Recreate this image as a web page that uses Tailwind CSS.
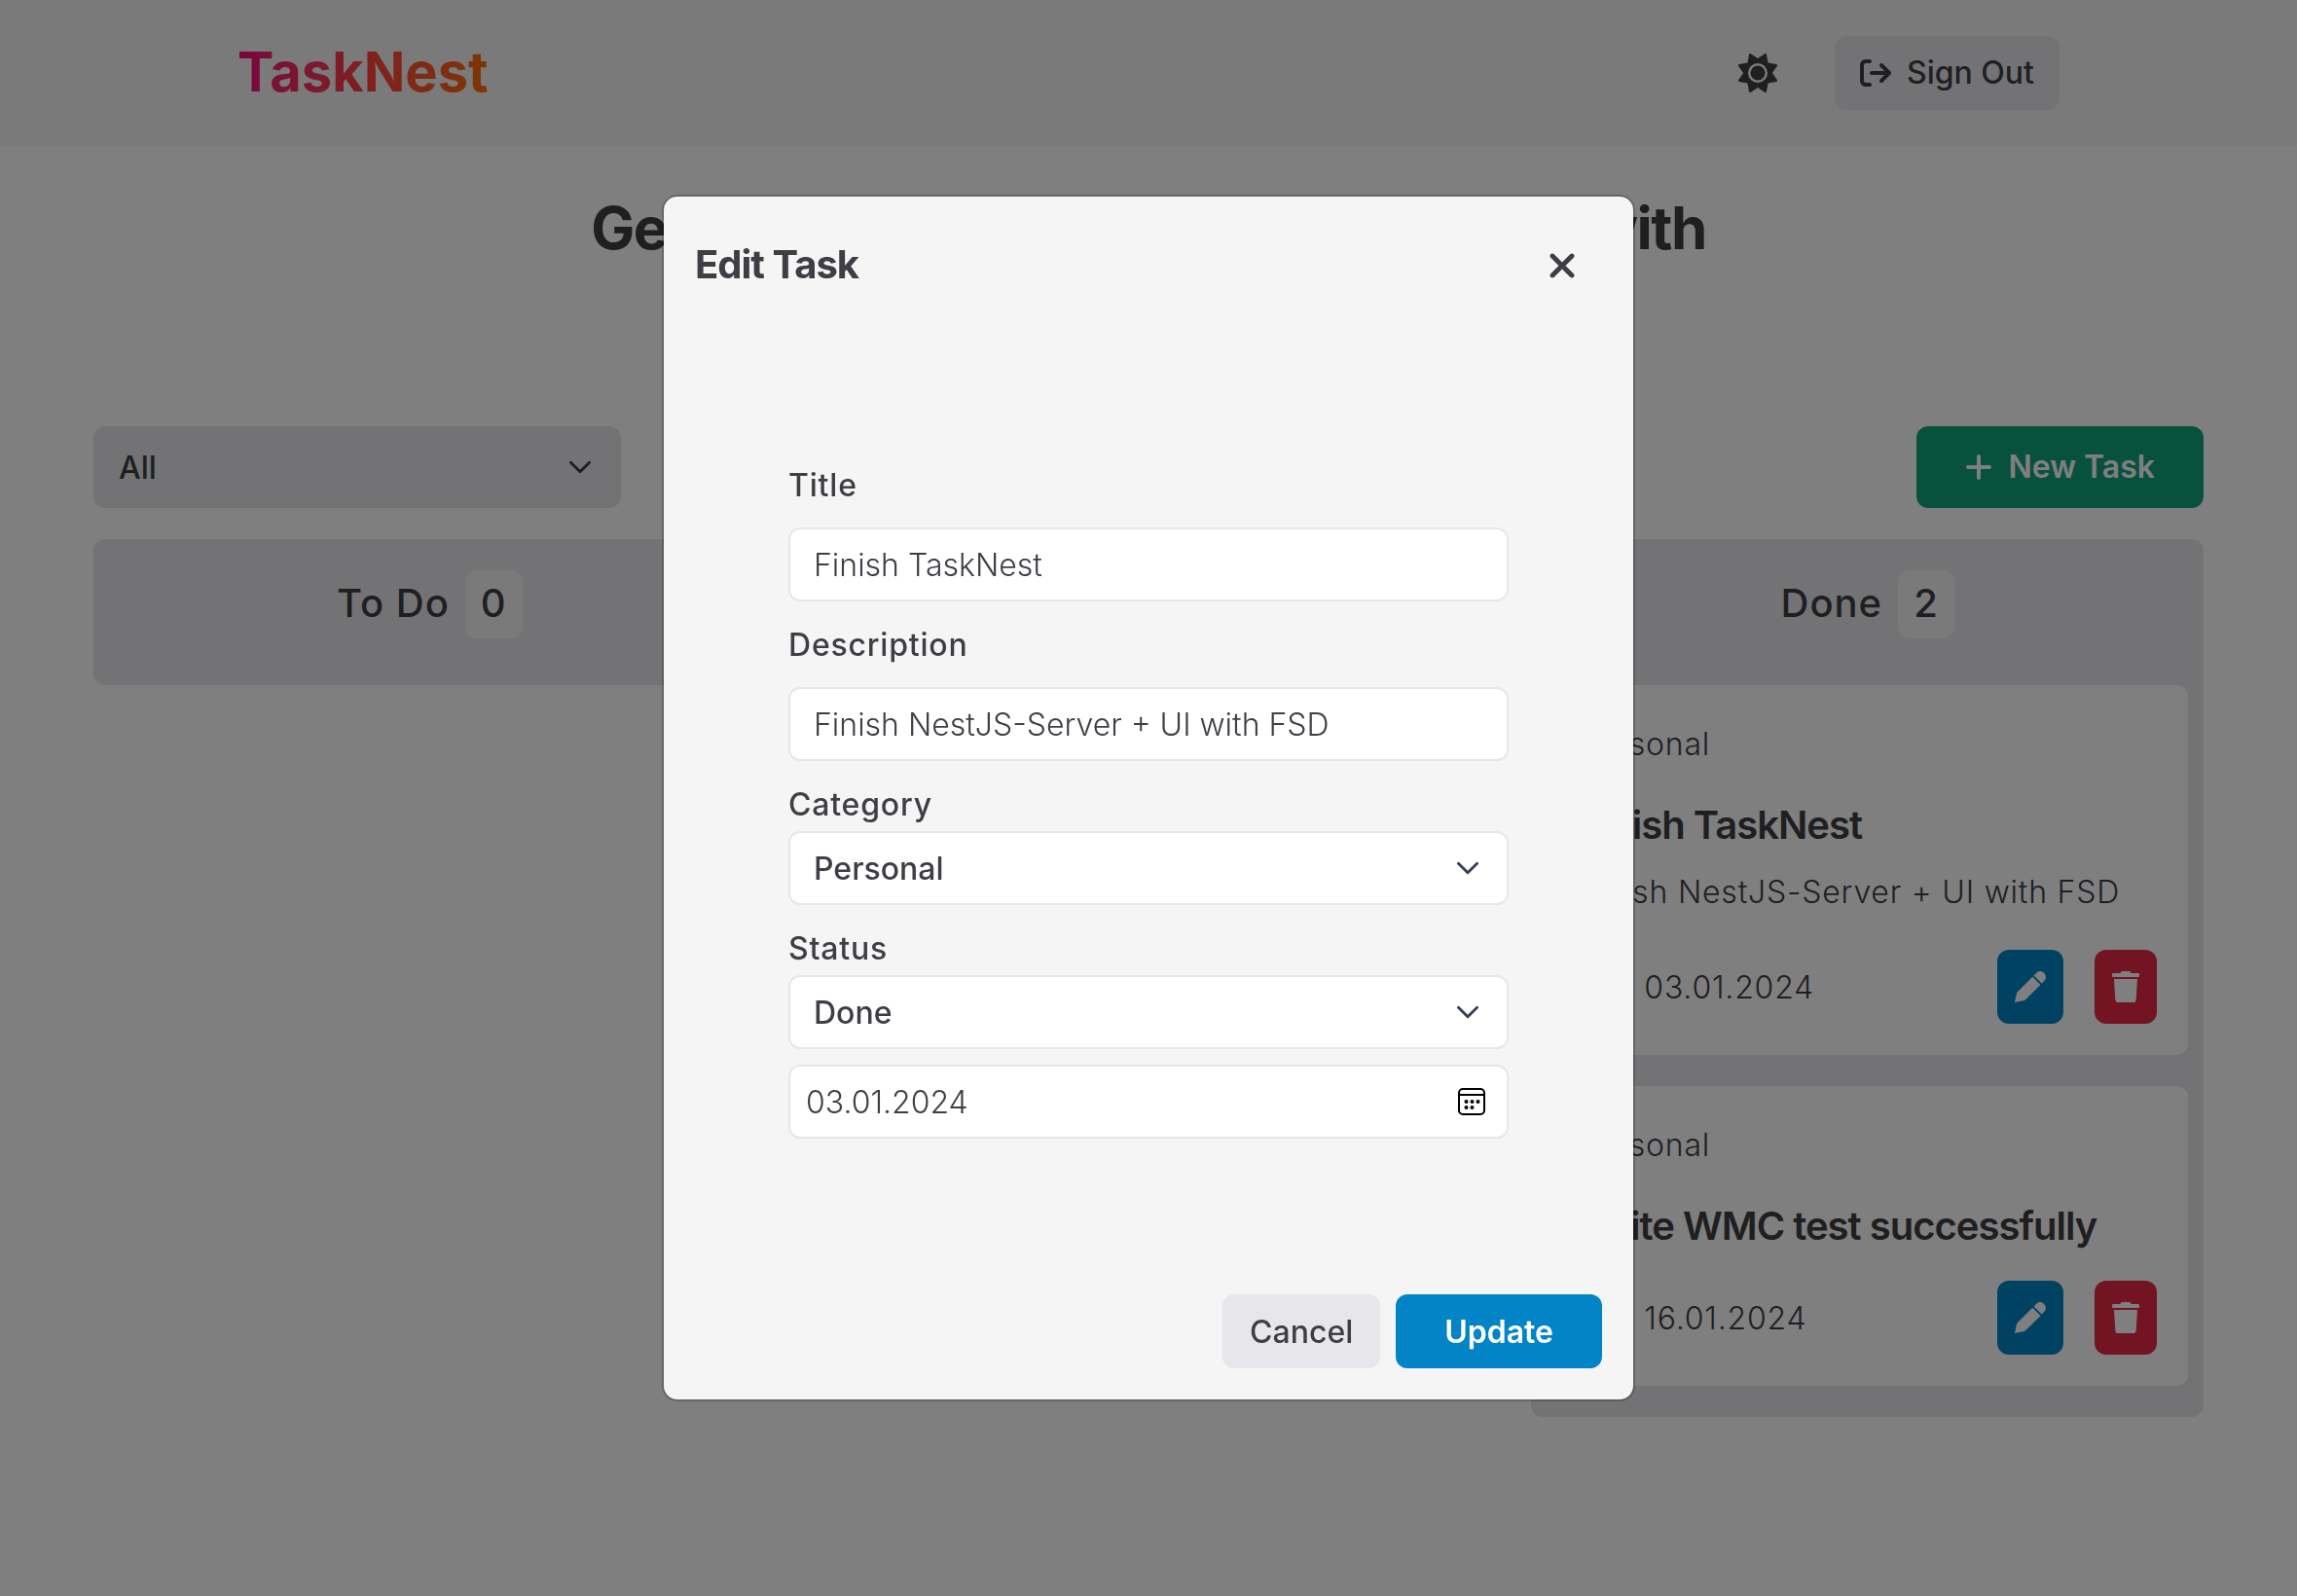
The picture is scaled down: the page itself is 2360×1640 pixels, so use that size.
<!DOCTYPE html>
<html lang="en">
<head>
<meta charset="utf-8">
<title>TaskNest</title>
<script src="https://cdn.jsdelivr.net/npm/@tailwindcss/browser@4"></script>
</head>
<body class="min-h-screen bg-white font-['Inter',sans-serif] text-[32px] leading-[50px] text-[#3f3e45]">

<svg class="hidden" aria-hidden="true">
  <symbol id="pen" viewBox="0 0 32 32"><path fill="currentColor" d="M0 32L2 22.500Q2.300 21.500 3 21L18.300 5.700L26.500 13.900L11.300 29Q10.700 29.600 9.800 29.900ZM19.600 4.400L22.500 1.500Q25.900-1.300 29.300 1.300L30.800 2.800Q33.200 6 30.600 9.500L27.800 12.600Z"/></symbol>
  <symbol id="trash" viewBox="0 0 448 512"><path fill="currentColor" d="M432 32H312l-9.4-18.7A24 24 0 0 0 281.1 0H166.8a23.72 23.72 0 0 0-21.4 13.3L136 32H16A16 16 0 0 0 0 48v32a16 16 0 0 0 16 16h416a16 16 0 0 0 16-16V48a16 16 0 0 0-16-16zM53.2 467a48 48 0 0 0 47.9 45h245.8a48 48 0 0 0 47.9-45L416 128H32z"/></symbol>
  <symbol id="chevron" viewBox="0 0 20 20"><path fill="none" stroke="currentColor" stroke-width="1.200" stroke-linecap="round" stroke-linejoin="round" d="M6 8l4 4 4-4"/></symbol>
  <symbol id="calendar" viewBox="0 0 28 28"><rect x="1" y="1" width="26" height="26" rx="4" fill="none" stroke="currentColor" stroke-width="2"/><path stroke="currentColor" stroke-width="2" d="M1 7h26"/><g fill="currentColor"><circle cx="8.500" cy="14" r="2"/><circle cx="14.500" cy="14" r="2"/><circle cx="20.500" cy="14" r="2"/><circle cx="8.500" cy="20" r="2"/><circle cx="14.500" cy="20" r="2"/></g></symbol>
</svg>

<header class="flex h-[150px] items-center justify-between bg-[#f5f5f5] px-[244px]">
  <a href="#" class="bg-gradient-to-r from-[#f0047f] via-[#ff3e3c] to-[#ff6a00] bg-clip-text pb-0.5 text-[56px] leading-[64px] font-bold text-transparent">TaskNest</a>
  <div class="flex items-center gap-[59px]">
    <button type="button" aria-label="Toggle theme">
      <svg class="size-10" viewBox="0 0 512 512" fill="currentColor"><path d="M361.5 1.200c5 2.100 8.600 6.600 9.600 11.900L391 121l107.900 19.800c5.300 1 9.800 4.600 11.900 9.600s1.500 10.700-1.600 15.200L446.900 256l62.300 90.300c3.100 4.500 3.700 10.200 1.600 15.200s-6.600 8.600-11.900 9.600L391 391 371.100 498.900c-1 5.300-4.600 9.800-9.600 11.900s-10.700 1.500-15.200-1.600L256 446.900l-90.300 62.300c-4.500 3.100-10.200 3.700-15.200 1.600s-8.600-6.600-9.600-11.900L121 391 13.100 371.100c-5.300-1-9.800-4.600-11.900-9.600s-1.500-10.700 1.600-15.200L65.100 256 2.800 165.700c-3.100-4.500-3.700-10.200-1.600-15.200s6.600-8.600 11.900-9.600L121 121 140.900 13.100c1-5.300 4.600-9.800 9.600-11.900s10.700-1.500 15.200 1.600L256 65.100 346.300 2.800c4.500-3.100 10.200-3.700 15.200-1.600zM160 256a96 96 0 1 1 192 0 96 96 0 1 1 -192 0zm224 0a128 128 0 1 0 -256 0 128 128 0 1 0 256 0z"/></svg>
    </button>
    <button type="button" class="flex h-[76px] items-center gap-4 rounded-xl bg-[#e7e7eb] px-[26px] font-medium">
      <svg class="size-8" viewBox="0 0 512 512" fill="currentColor"><path d="M502.6 278.6c12.5-12.5 12.5-32.8 0-45.3l-128-128c-12.5-12.5-32.8-12.5-45.3 0s-12.5 32.8 0 45.3L402.7 224 192 224c-17.7 0-32 14.3-32 32s14.3 32 32 32l210.7 0-73.4 73.4c-12.5 12.5-12.5 32.8 0 45.3s32.8 12.5 45.3 0l128-128zM160 96c17.7 0 32-14.3 32-32s-14.3-32-32-32L96 32C43 32 0 75 0 128L0 384c0 53 43 96 96 96l64 0c17.7 0 32-14.3 32-32s-14.3-32-32-32l-64 0c-17.7 0-32-14.3-32-32l0-256c0-17.7 14.3-32 32-32l64 0z"/></svg>
      Sign Out
    </button>
  </div>
</header>

<main class="px-24 pt-12">
  <h1 class="h-60 text-center text-[60px] leading-[72px] font-bold tracking-tight">Get all of your tasks done effectively with<br>TaskNest</h1>

  <div class="flex justify-between">
    <div class="relative w-1/4">
      <select aria-label="Filter by category" class="h-[84px] w-full appearance-none rounded-xl bg-[#e7e7eb] px-[26px] pt-0.5 font-medium"><option>All</option><option>Personal</option></select>
      <svg class="pointer-events-none absolute top-[18px] right-[18px] size-12"><use href="#chevron"/></svg>
    </div>
    <button type="button" class="flex h-[84px] items-center gap-4 rounded-xl bg-[#10a27a] px-[50px] font-semibold text-white">
      <svg class="h-8 w-7" viewBox="0 0 448 512" fill="currentColor"><path d="M256 80c0-17.700-14.300-32-32-32s-32 14.300-32 32v144H48c-17.700 0-32 14.300-32 32s14.300 32 32 32h144v144c0 17.700 14.300 32 32 32s32-14.300 32-32V288h144c17.700 0 32-14.300 32-32s-14.300-32-32-32H256z"/></svg>
      New Task
    </button>
  </div>

  <div class="mt-8 grid grid-cols-3 items-start gap-12">
    <section class="rounded-xl bg-[#e7e7eb] px-4 pt-8">
      <h2 class="mb-12 flex items-start justify-center gap-4 text-[40px] leading-[68px] font-medium tracking-wide">To Do <span class="rounded-xl bg-[#f5f5f5] px-4 pb-0.5">0</span></h2>
    </section>
    <section class="rounded-xl bg-[#e7e7eb] px-4 pt-8">
      <h2 class="mb-12 flex items-start justify-center gap-4 text-[40px] leading-[68px] font-medium tracking-wide">In Progress <span class="rounded-xl bg-[#f5f5f5] px-4 pb-0.5">0</span></h2>
    </section>
    <section class="rounded-xl bg-[#e7e7eb] px-4 pt-8 pb-8">
      <h2 class="mb-12 flex items-start justify-center gap-4 text-[40px] leading-[68px] font-medium tracking-wide">Done <span class="rounded-xl bg-[#f5f5f5] px-4 pb-0.5">2</span></h2>
      <div class="flex flex-col gap-8">
        <article class="rounded-xl bg-white px-8 pt-9 pb-8 font-light tracking-wide">
          <p>Personal</p>
          <h3 class="mt-[30px] text-[40px] leading-[56px] font-semibold tracking-tight">Finish TaskNest</h3>
          <p class="mt-4 pb-1.5">Finish NestJS-Server + UI with FSD</p>
          <div class="mt-7 flex items-center gap-8">
            <svg class="size-9"><use href="#calendar"/></svg>
            <time datetime="2024-01-03" class="mr-auto pt-0.5">03.01.2024</time>
            <button type="button" aria-label="Edit task" class="flex h-[76px] items-center rounded-xl bg-[#0284c7] px-[18px] text-white"><svg class="size-8"><use href="#pen"/></svg></button>
            <button type="button" aria-label="Delete task" class="flex h-[76px] items-center rounded-xl bg-[#e42843] px-[18px] text-white"><svg class="h-8 w-7"><use href="#trash"/></svg></button>
          </div>
        </article>
        <article class="rounded-xl bg-white px-8 pt-9 pb-8 font-light tracking-wide">
          <p>Personal</p>
          <h3 class="mt-[30px] text-[40px] leading-[56px] font-semibold tracking-tight">Write WMC test successfully</h3>
          <div class="mt-7 flex items-center gap-8">
            <svg class="size-9"><use href="#calendar"/></svg>
            <time datetime="2024-01-16" class="mr-auto pt-0.5">16.01.2024</time>
            <button type="button" aria-label="Edit task" class="flex h-[76px] items-center rounded-xl bg-[#0284c7] px-[18px] text-white"><svg class="size-8"><use href="#pen"/></svg></button>
            <button type="button" aria-label="Delete task" class="flex h-[76px] items-center rounded-xl bg-[#e42843] px-[18px] text-white"><svg class="h-8 w-7"><use href="#trash"/></svg></button>
          </div>
        </article>
      </div>
    </section>
  </div>
</main>

<div class="fixed inset-0 flex items-center justify-center bg-black/50">
  <div role="dialog" aria-labelledby="dialog-title" class="flex min-h-[1240px] w-full max-w-[1000px] flex-col justify-between rounded-2xl border-2 border-black/20 bg-[#f5f5f5] bg-clip-padding p-8">
    <div class="flex items-center justify-between pb-1">
      <h2 id="dialog-title" class="text-[40px] leading-[76px] font-bold tracking-tight">Edit Task</h2>
      <button type="button" aria-label="Close" class="flex h-[76px] w-[82px] items-center justify-center pt-0.5"><svg class="h-10 w-[30px]" viewBox="0 0 384 512" fill="currentColor"><path d="M342.6 150.6c12.5-12.5 12.5-32.8 0-45.3s-32.8-12.5-45.3 0L192 210.7 86.6 105.4c-12.5-12.5-32.8-12.5-45.3 0s-12.5 32.8 0 45.3L146.7 256 41.4 361.4c-12.5 12.5-12.5 32.8 0 45.3s32.8 12.5 45.3 0L192 301.3 297.4 406.6c12.5 12.5 32.8 12.5 45.3 0s12.5-32.8 0-45.3L237.3 256 342.6 150.6z"/></svg></button>
    </div>
    <form id="task-form" class="mx-24 flex flex-col">
      <label for="title" class="font-medium tracking-wide">Title</label>
      <input id="title" type="text" value="Finish TaskNest" class="mt-[18px] h-[76px] rounded-xl border-2 border-[#e7e7eb] bg-white px-6 font-light">
      <label for="description" class="mt-5 font-medium tracking-wide">Description</label>
      <input id="description" type="text" value="Finish NestJS-Server + UI with FSD" class="mt-[18px] h-[76px] rounded-xl border-2 border-[#e7e7eb] bg-white px-6 font-light">
      <label for="category" class="mt-5 font-medium tracking-wide">Category</label>
      <div class="relative mt-0.5">
        <select id="category" class="block h-[76px] w-full appearance-none rounded-xl border-2 border-[#e7e7eb] bg-white px-6 pt-0.5 font-medium"><option>Personal</option></select>
        <svg class="pointer-events-none absolute top-[14px] right-[18px] size-12 text-gray-700"><use href="#chevron"/></svg>
      </div>
      <label for="status" class="mt-5 font-medium tracking-wide">Status</label>
      <div class="relative mt-0.5">
        <select id="status" class="block h-[76px] w-full appearance-none rounded-xl border-2 border-[#e7e7eb] bg-white px-6 pt-0.5 font-medium"><option>Done</option><option>To Do</option><option>In Progress</option></select>
        <svg class="pointer-events-none absolute top-[14px] right-[18px] size-12 text-gray-700"><use href="#chevron"/></svg>
      </div>
      <div class="relative mt-4">
        <input type="text" aria-label="Due date" value="03.01.2024" class="block h-[76px] w-full rounded-xl border-2 border-[#e7e7eb] bg-white px-4 font-light">
        <svg class="pointer-events-none absolute top-6 right-6 size-7 text-black"><use href="#calendar"/></svg>
      </div>
    </form>
    <div class="flex justify-end gap-4">
      <button type="button" class="h-[76px] rounded-xl bg-[#e7e7eb] px-7 pt-0.5 font-medium">Cancel</button>
      <button type="submit" form="task-form" class="h-[76px] rounded-xl bg-[#0284c7] px-[50px] pt-0.5 font-semibold text-white">Update</button>
    </div>
  </div>
</div>
</body>
</html>
